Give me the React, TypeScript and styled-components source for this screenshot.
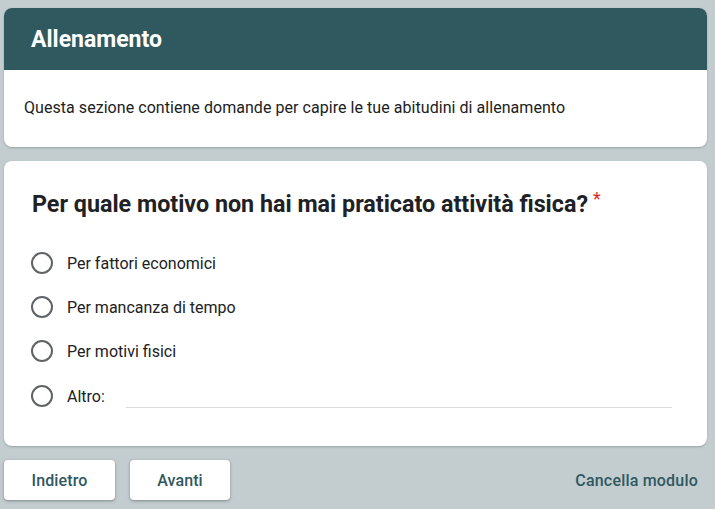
import styled, { createGlobalStyle } from "styled-components";

const GlobalStyle = createGlobalStyle`
  html, body {
    margin: 0;
    padding: 0;
    background: #c3cdcf;
  }
  body {
    font-family: Roboto, "Liberation Sans", Arial, sans-serif;
    color: #202124;
  }
`;

const Page = styled.div`
  width: 715px;
  height: 509px;
  padding: 8px 8px 0 4px;
  box-sizing: border-box;
  display: flex;
  flex-direction: column;
`;

const Card = styled.section`
  background: #fff;
  border-radius: 8px;
  overflow: hidden;
  box-shadow: 0 1px 2px rgba(60, 64, 67, 0.3);
`;

const SectionHeader = styled.header`
  background: #30585f;
  height: 62px;
  display: flex;
  align-items: center;
  padding: 0 27px;
`;

const SectionTitle = styled.h1`
  margin: 0;
  color: #fff;
  font-size: 23px;
  font-weight: 700;
`;

const Description = styled.p`
  margin: 0;
  padding: 27px 20px 29px;
  font-size: 16px;
  line-height: 21px;
  letter-spacing: 0.05px;
`;

const QuestionCard = styled(Card)`
  margin-top: 14px;
  padding: 27px 28px 38px 27px;
`;

const Question = styled.h2`
  margin: 0 0 31px;
  padding-left: 1px;
  font-size: 23.3px;
  font-weight: 700;
  line-height: 32px;
`;

const Required = styled.span`
  color: #d93025;
  font-size: 18px;
  font-weight: 400;
  margin-left: 5px;
  vertical-align: top;
  position: relative;
  top: -5px;
`;

const Options = styled.div`
  display: flex;
  flex-direction: column;
  gap: 20px;
`;

const Option = styled.label<{ $other?: boolean }>`
  display: flex;
  align-items: center;
  height: 24px;
  margin-top: ${(p) => (p.$other ? 1 : 0)}px;
  font-size: 16px;
  color: #202124;
`;

const Radio = styled.span`
  width: 18px;
  height: 18px;
  border: 2px solid #5f6368;
  border-radius: 50%;
  margin-right: 14px;
  flex-shrink: 0;
`;

const OtherInput = styled.span`
  flex: 1;
  margin-left: 21px;
  margin-right: 7px;
  align-self: flex-end;
  border-bottom: 1px solid #dadce0;
`;

const Footer = styled.footer`
  display: flex;
  align-items: center;
  margin-top: 14px;
  gap: 15px;
`;

const NavButton = styled.button<{ $w: number }>`
  width: ${(p) => p.$w}px;
  height: 40px;
  background: #fff;
  border: none;
  border-radius: 4px;
  box-shadow: 0 1px 2px rgba(60, 64, 67, 0.3), 0 1px 3px 1px rgba(60, 64, 67, 0.15);
  color: #30585f;
  font-family: Roboto, "Liberation Sans", Arial, sans-serif;
  font-size: 16px;
  font-weight: 500;
  letter-spacing: 0.1px;
  cursor: pointer;
`;

const ClearLink = styled.span`
  margin-left: auto;
  margin-right: 9px;
  color: #30585f;
  font-size: 16px;
  font-weight: 500;
  letter-spacing: 0.2px;
`;

const options = ["Per fattori economici", "Per mancanza di tempo", "Per motivi fisici"];

export default function App() {
  return (
    <>
      <GlobalStyle />
      <Page>
        <Card>
          <SectionHeader>
            <SectionTitle>Allenamento</SectionTitle>
          </SectionHeader>
          <Description>
            Questa sezione contiene domande per capire le tue abitudini di allenamento
          </Description>
        </Card>
        <QuestionCard>
          <Question>
            Per quale motivo non hai mai praticato attività fisica?
            <Required>*</Required>
          </Question>
          <Options>
            {options.map((o) => (
              <Option key={o}>
                <Radio />
                {o}
              </Option>
            ))}
            <Option $other>
              <Radio />
              Altro:
              <OtherInput />
            </Option>
          </Options>
        </QuestionCard>
        <Footer>
          <NavButton $w={111}>Indietro</NavButton>
          <NavButton $w={100}>Avanti</NavButton>
          <ClearLink>Cancella modulo</ClearLink>
        </Footer>
      </Page>
    </>
  );
}
